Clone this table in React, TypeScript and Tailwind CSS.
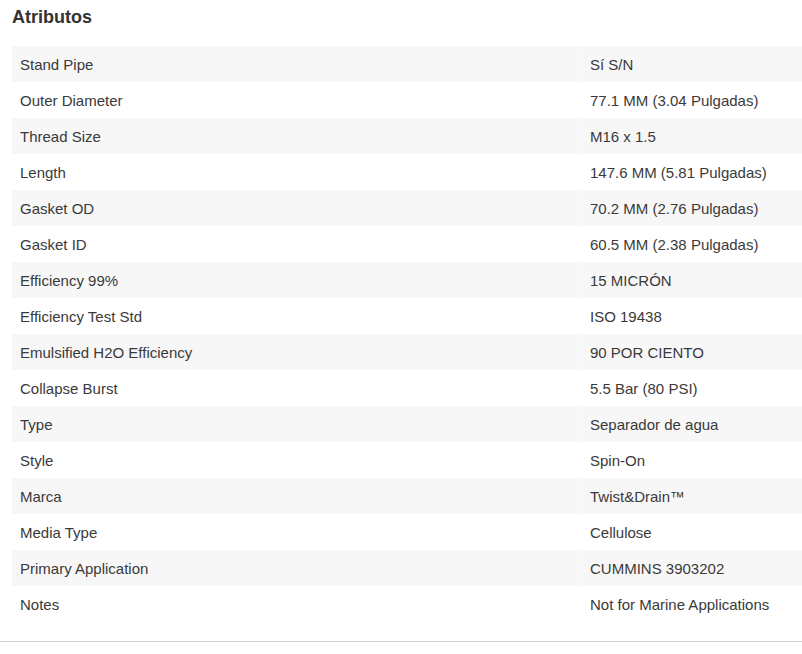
const attributes: [string, string][] = [
  ['Stand Pipe', 'Sí S/N'],
  ['Outer Diameter', '77.1 MM (3.04 Pulgadas)'],
  ['Thread Size', 'M16 x 1.5'],
  ['Length', '147.6 MM (5.81 Pulgadas)'],
  ['Gasket OD', '70.2 MM (2.76 Pulgadas)'],
  ['Gasket ID', '60.5 MM (2.38 Pulgadas)'],
  ['Efficiency 99%', '15 MICRÓN'],
  ['Efficiency Test Std', 'ISO 19438'],
  ['Emulsified H2O Efficiency', '90 POR CIENTO'],
  ['Collapse Burst', '5.5 Bar (80 PSI)'],
  ['Type', 'Separador de agua'],
  ['Style', 'Spin-On'],
  ['Marca', 'Twist&Drain™'],
  ['Media Type', 'Cellulose'],
  ['Primary Application', 'CUMMINS 3903202'],
  ['Notes', 'Not for Marine Applications'],
];

export default function App() {
  return (
    <div className="min-h-screen bg-white font-['Liberation_Sans',Arial,sans-serif] text-[#3a3a3a]">
      <div className="pl-3 pt-[5px]">
        <h2 className="text-[18px] leading-6 font-bold text-[#333] mb-[17px]">Atributos</h2>

        <div className="flex flex-col">
          {attributes.map(([label, value], i) => (
            <div
              key={label}
              className={`flex h-9 text-[15px] ${i % 2 === 0 ? 'bg-[#f7f7f7]' : 'bg-white'}`}
            >
              <div className="w-[569px] flex items-center px-2 pt-[2px]">{label}</div>
              <div className="flex-1 flex items-center px-2 pt-[2px] border-l border-[#fcfcfc]">{value}</div>
            </div>
          ))}
        </div>
      </div>

      {/* footer rule */}
      <div className="mt-[19px] border-t border-[#cfcfcf]" />
    </div>
  );
}
